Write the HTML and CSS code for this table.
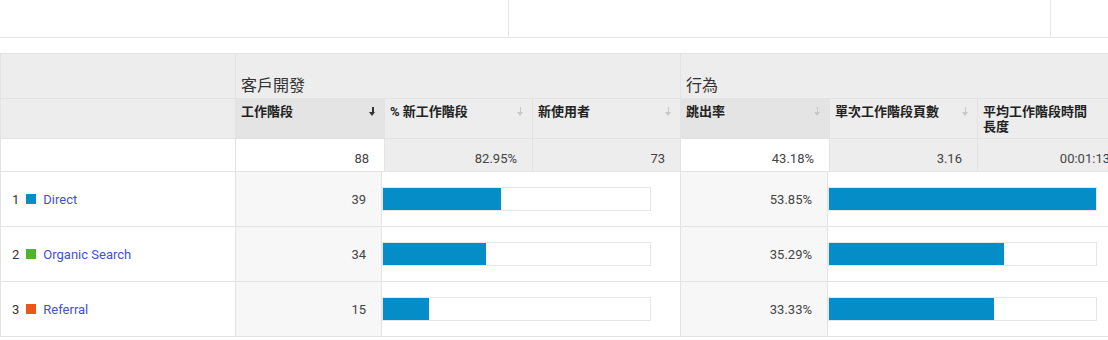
FILE: index.html
```html
<!DOCTYPE html>
<html lang="zh-Hant">
<head>
<meta charset="utf-8">
<title>報表</title>
<link rel="stylesheet" href="styles.css">
</head>
<body>
<div class="page">
  <div class="topbar">
    <div class="seg seg-a"></div>
    <div class="seg seg-b"></div>
    <div class="seg seg-c"></div>
  </div>

  <div class="report">
    <div class="hgrid">
      <div class="hcell group-empty"></div>
      <div class="hcell group">客戶開發</div>
      <div class="hcell group">行為</div>

      <div class="hcell mh-empty"></div>
      <div class="hcell mh sorted"><span class="mh-text">工作階段</span><span class="arrow dark"></span></div>
      <div class="hcell mh"><span class="mh-text">% 新工作階段</span><span class="arrow"></span></div>
      <div class="hcell mh"><span class="mh-text">新使用者</span><span class="arrow"></span></div>
      <div class="hcell mh sorted"><span class="mh-text">跳出率</span><span class="arrow"></span></div>
      <div class="hcell mh"><span class="mh-text">單次工作階段頁數</span><span class="arrow"></span></div>
      <div class="hcell mh"><span class="mh-text">平均工作階段時間長度</span><span class="arrow"></span></div>

      <div class="hcell sum-empty"></div>
      <div class="hcell sum white">88</div>
      <div class="hcell sum">82.95%</div>
      <div class="hcell sum">73</div>
      <div class="hcell sum white">43.18%</div>
      <div class="hcell sum">3.16</div>
      <div class="hcell sum">00:01:13</div>
    </div>

    <div class="dgrid">
      <div class="dcell dim"><span class="idx">1</span><span class="sq blue"></span><a class="lnk" href="#">Direct</a></div>
      <div class="dcell num">39</div>
      <div class="dcell barcell"><div class="bar"><div class="fill" style="width:44.32%"></div></div></div>
      <div class="dcell num">53.85%</div>
      <div class="dcell barcell"><div class="bar"><div class="fill" style="width:100%"></div></div></div>

      <div class="dcell dim"><span class="idx">2</span><span class="sq green"></span><a class="lnk" href="#">Organic Search</a></div>
      <div class="dcell num">34</div>
      <div class="dcell barcell"><div class="bar"><div class="fill" style="width:38.64%"></div></div></div>
      <div class="dcell num">35.29%</div>
      <div class="dcell barcell"><div class="bar"><div class="fill" style="width:65.53%"></div></div></div>

      <div class="dcell dim"><span class="idx">3</span><span class="sq orange"></span><a class="lnk" href="#">Referral</a></div>
      <div class="dcell num">15</div>
      <div class="dcell barcell"><div class="bar"><div class="fill" style="width:17.05%"></div></div></div>
      <div class="dcell num">33.33%</div>
      <div class="dcell barcell"><div class="bar"><div class="fill" style="width:61.89%"></div></div></div>
    </div>
  </div>
</div>
</body>
</html>
```

FILE: styles.css
```css
* { box-sizing: border-box; }
html, body { margin: 0; padding: 0; background: #fff; }
body {
  font-family: Roboto, "Noto Sans CJK TC", "Noto Sans", sans-serif;
  font-size: 13px;
  color: #333;
  width: 1108px;
  height: 340px;
  overflow: hidden;
}
.page { width: 1108px; overflow: hidden; }

.topbar {
  display: flex;
  height: 38px;
  border-bottom: 1px solid #e5e5e5;
}
.seg { height: 100%; }
.seg-a { width: 508px; }
.seg-b { width: 542px; border-left: 1px solid #e5e5e5; }
.seg-c { flex: 1; border-left: 1px solid #e5e5e5; }

.report {
  margin-top: 15px;
  width: 1140px;
  border-top: 1px solid #e3e3e3;
  border-left: 1px solid #e3e3e3;
}

.hgrid {
  display: grid;
  grid-template-columns: 234px 149px 148px 148px 149px 148px 148px;
  grid-template-rows: 45px 40px 32px;
}
.hcell { background: #ededed; }
.group-empty { grid-column: 1; border-bottom: 1px solid #e3e3e3; }
.group {
  grid-column: span 3;
  border-left: 1px solid #e3e3e3;
  border-bottom: 1px solid #e3e3e3;
  font-size: 16px;
  line-height: 18px;
  padding: 23px 0 0 5px;
  color: #333;
}
.mh-empty { border-bottom: 1px solid #e3e3e3; }
.mh {
  display: flex;
  align-items: flex-start;
  gap: 13px;
  border-left: 1px solid #e3e3e3;
  border-bottom: 1px solid #e3e3e3;
  padding: 5px 8px 0 5px;
  font-weight: 700;
  font-size: 13px;
  line-height: 15px;
  color: #222;
}
.mh.sorted { background: #e4e4e4; }
.mh-text { flex: 1; }
.arrow {
  flex: none;
  width: 7px;
  height: 9px;
  margin-top: 3px;
  position: relative;
}
.arrow::before {
  content: "";
  position: absolute;
  left: 3px; top: 0;
  width: 1px; height: 5px;
  background: #c8c8c8;
}
.arrow::after {
  content: "";
  position: absolute;
  left: 0; top: 5px;
  border-left: 3.5px solid transparent;
  border-right: 3.5px solid transparent;
  border-top: 4px solid #c8c8c8;
}
.arrow.dark::before { background: #333; width: 2px; left: 2.5px; }
.arrow.dark::after { border-top-color: #333; }

.sum-empty { background: #fff; }
.sum {
  border-left: 1px solid #e3e3e3;
  text-align: right;
  padding: 12px 15px 0 0;
  line-height: 16px;
  color: #444;
}
.sum.white { background: #fff; }

.dgrid {
  display: grid;
  grid-template-columns: 234px 146px 299px 147px 298px;
  grid-auto-rows: 55px;
  border-bottom: 1px solid #e3e3e3;
}
.dcell {
  border-top: 1px solid #e3e3e3;
  display: flex;
  align-items: center;
}
.dim { padding-left: 11px; gap: 7px; }
.idx { color: #333; }
.sq { width: 10px; height: 10px; display: inline-block; }
.sq.blue { background: #058dc7; }
.sq.green { background: #50b432; }
.sq.orange { background: #ed561b; }
.lnk { color: #3f51d6; text-decoration: none; }
.num {
  justify-content: flex-end;
  padding-right: 15px;
  background: #f7f7f7;
  border-left: 1px solid #e3e3e3;
  color: #444;
}
.barcell { border-left: 1px solid #e3e3e3; }
.bar {
  width: 269px;
  height: 24px;
  border: 1px solid #e6e6e6;
  background: #fff;
  margin-left: 0;
}
.fill { height: 100%; background: #058dc7; }
```
